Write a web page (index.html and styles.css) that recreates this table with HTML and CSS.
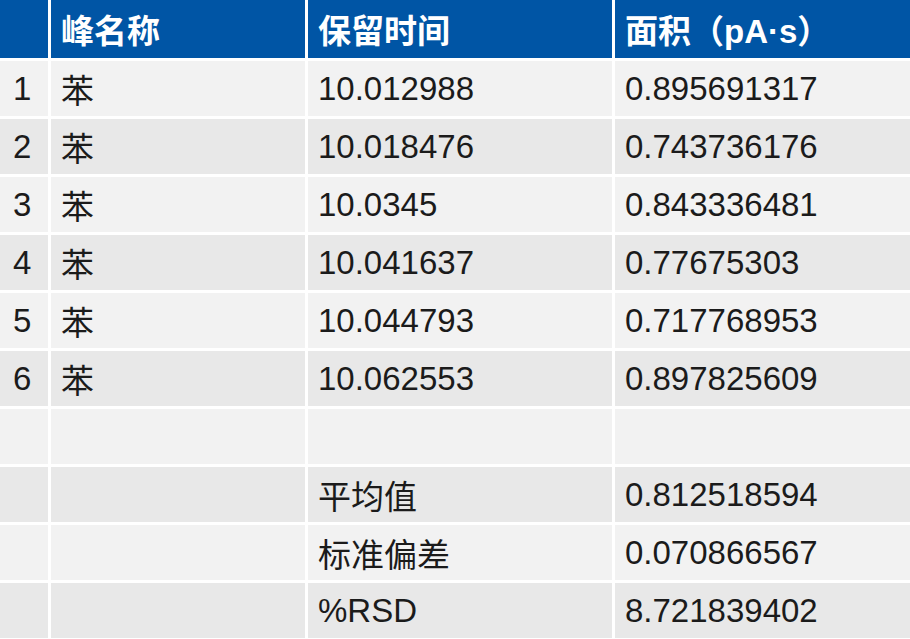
FILE: index.html
```html
<!DOCTYPE html>
<html lang="zh">
<head>
<meta charset="utf-8">
<link rel="stylesheet" href="styles.css">
</head>
<body>
<div class="table">
  <div class="row head">
    <div class="cell first"></div>
    <div class="cell">峰名称</div>
    <div class="cell">保留时间</div>
    <div class="cell">面积（pA·s）</div>
  </div>
  <div class="row light">
    <div class="cell first">1</div><div class="cell">苯</div><div class="cell">10.012988</div><div class="cell">0.895691317</div>
  </div>
  <div class="row dark">
    <div class="cell first">2</div><div class="cell">苯</div><div class="cell">10.018476</div><div class="cell">0.743736176</div>
  </div>
  <div class="row light">
    <div class="cell first">3</div><div class="cell">苯</div><div class="cell">10.0345</div><div class="cell">0.843336481</div>
  </div>
  <div class="row dark">
    <div class="cell first">4</div><div class="cell">苯</div><div class="cell">10.041637</div><div class="cell">0.77675303</div>
  </div>
  <div class="row light">
    <div class="cell first">5</div><div class="cell">苯</div><div class="cell">10.044793</div><div class="cell">0.717768953</div>
  </div>
  <div class="row dark">
    <div class="cell first">6</div><div class="cell">苯</div><div class="cell">10.062553</div><div class="cell">0.897825609</div>
  </div>
  <div class="row light">
    <div class="cell first"></div><div class="cell"></div><div class="cell"></div><div class="cell"></div>
  </div>
  <div class="row dark">
    <div class="cell first"></div><div class="cell"></div><div class="cell">平均值</div><div class="cell">0.812518594</div>
  </div>
  <div class="row light">
    <div class="cell first"></div><div class="cell"></div><div class="cell">标准偏差</div><div class="cell">0.070866567</div>
  </div>
  <div class="row dark">
    <div class="cell first"></div><div class="cell"></div><div class="cell">%RSD</div><div class="cell">8.721839402</div>
  </div>
</div>
</body>
</html>
```

FILE: styles.css
```css
html, body {
  margin: 0;
  padding: 0;
  background: #ffffff;
}

body {
  width: 910px;
  height: 639px;
  overflow: hidden;
  font-family: "Liberation Sans", "Noto Sans CJK SC", sans-serif;
  font-size: 33px;
  color: #1b1b1b;
}

.table {
  display: flex;
  flex-direction: column;
  gap: 3px;
}

.row {
  display: grid;
  grid-template-columns: 48px 254px 304px 1fr;
  column-gap: 3px;
  height: 55px;
}

.row.head {
  height: 58px;
  color: #ffffff;
  font-weight: bold;
}

.cell {
  display: flex;
  align-items: center;
  padding-left: 10px;
  padding-top: 1px;
  white-space: nowrap;
}

.cell.first {
  padding-left: 13px;
}

.head .cell {
  background: #0055a5;
  padding-top: 0;
}

.light .cell {
  background: #f2f2f2;
}

.dark .cell {
  background: #e8e8e8;
}
```
